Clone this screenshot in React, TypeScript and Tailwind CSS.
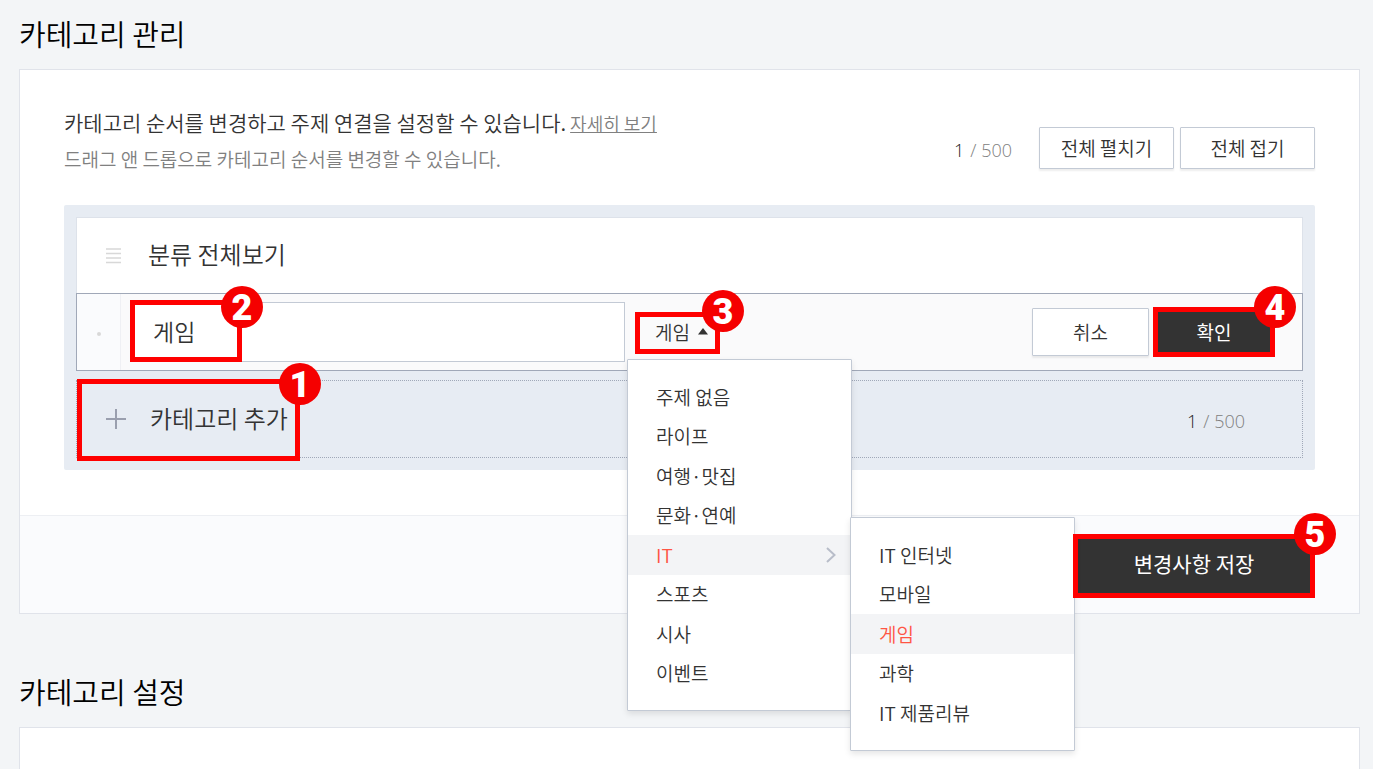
import React, { useState } from 'react'
import clsx from 'clsx'

const topics = ['주제 없음', '라이프', '여행·맛집', '문화·연예', 'IT', '스포츠', '시사', '이벤트']
const itTopics = ['IT 인터넷', '모바일', '게임', '과학', 'IT 제품리뷰']

// numbered guide frame laid over a control
function Step({ no, className, badge }: { no: number, className: string, badge: string }) {
  return (
    <span className={clsx('pointer-events-none absolute z-30 border-5 border-[#ff0000]', className)}>
      <span className={clsx("absolute flex size-[42px] items-center justify-center rounded-full bg-[#f50000] pt-0.5 font-['Roboto',sans-serif] text-[36px] leading-10 font-black text-white", badge)}>
        {no}
      </span>
    </span>
  )
}

function Count({ now, max }: { now: number, max: number }) {
  return (
    <p className="pt-1 font-['Open_Sans',sans-serif] text-[18px] leading-6 font-light text-[#808080]">
      <span className="mr-1.5 text-[#222]">{now}</span>/ {max}
    </p>
  )
}

function WhiteButton({ children, className }: { children: React.ReactNode, className: string }) {
  return (
    <button type="button" className={clsx('rounded-[1px] border border-[#c3cad5] bg-white text-[19px] text-[#333] shadow-[0_2px_2px_rgba(0,0,0,0.07)]', className)}>
      {children}
    </button>
  )
}

function TopicMenu({ value, onSelect }: { value: string, onSelect: (v: string) => void }) {
  const box = 'absolute z-10 w-[225px] rounded-[1px] border border-[#c3cad5] bg-white py-[17px] shadow-[0_3px_6px_rgba(0,0,0,0.1)]'
  const item = 'flex h-full w-full items-center justify-between pl-7 text-left text-[19px]'

  return (
    <ul className={clsx(box, 'top-[65px] left-0 grid h-[352px] auto-rows-fr')}>
      {topics.map(t => (
        <li key={t} className={clsx('relative', t === 'IT' && 'bg-[#f3f4f6]')}>
          <button type="button" className={clsx(item, t === 'IT' ? 'pr-[15px] text-[#ff5544]' : 'text-[#333]')} onClick={() => onSelect(t)}>
            {t}
            {t === 'IT' && (
              <svg width="10" height="16" viewBox="0 0 10 16" fill="none" stroke="#b8bdc9" strokeWidth="2">
                <path d="M1 1l7.5 7L1 15" />
              </svg>
            )}
          </button>
          {t === 'IT' && (
            <ul className={clsx(box, '-top-[18px] left-full -ml-px grid h-[234px] auto-rows-fr')}>
              {itTopics.map(s => (
                <li key={s} className={clsx(s === value && 'bg-[#f3f4f6]')}>
                  <button type="button" className={clsx(item, s === value ? 'text-[#ff5544]' : 'text-[#333]')} onClick={() => onSelect(s)}>
                    {s}
                  </button>
                </li>
              ))}
            </ul>
          )}
        </li>
      ))}
    </ul>
  )
}

export default function App() {
  const [name, setName] = useState('게임')
  const [topic, setTopic] = useState('게임')
  const [open, setOpen] = useState(true)

  return (
    <div className="h-screen overflow-hidden bg-[#f3f5f7] pt-[11px] pr-[13px] pl-[19px] font-['Noto_Sans_CJK_KR',sans-serif] font-[350] text-[#333]">
      <h2 className="mb-3.5 text-[29px] leading-11 text-black">카테고리 관리</h2>

      <section className="border border-[#e0e3ea] bg-white">
        <div className="px-11 pt-[34px] pb-[45px]">
          <div className="flex justify-between">
            <div className="leading-9">
              <p className="text-[21px]">
                카테고리 순서를 변경하고 주제 연결을 설정할 수 있습니다.
                <a href="#" className="ml-1 text-[18px] text-[#808080] underline underline-offset-1">자세히 보기</a>
              </p>
              <p className="text-[19px] text-[#808080]">드래그 앤 드롭으로 카테고리 순서를 변경할 수 있습니다.</p>
            </div>
            <div className="mb-2 flex h-[42px] items-center self-end">
              <div className="mr-[27px]"><Count now={1} max={500} /></div>
              <WhiteButton className="mr-1.5 h-[42px] w-[135px]">전체 펼치기</WhiteButton>
              <WhiteButton className="h-[42px] w-[135px]">전체 접기</WhiteButton>
            </div>
          </div>

          <div className="mt-7 rounded-[2px] bg-[#e7ecf3] p-3">
            <div className="flex h-[76px] items-center border border-b-0 border-[#dde2ea] bg-white pl-[29px]">
              <svg width="15" height="16" viewBox="0 0 15 16" stroke="#d8d8d8" strokeWidth="1.5">
                <path d="M0 1h15M0 5.5h15M0 10h15M0 14.5h15" />
              </svg>
              <span className="ml-[27px] pb-1 text-[24px]">분류 전체보기</span>
            </div>

            <form className="relative flex h-[78px] items-center border border-[#a0a8b8] bg-[#fafafb]" onSubmit={e => e.preventDefault()}>
              <div className="flex h-full w-11 items-center justify-center border-r border-[#eff0f4] bg-[#fafbfd] pt-1">
                <span className="size-1 rounded-full bg-[#d8d8d8]" />
              </div>
              <div className="relative ml-2.5 h-[60px] w-[494px]">
                <input
                  aria-label="카테고리 이름"
                  value={name}
                  onChange={e => setName(e.target.value)}
                  className="h-full w-full border border-[#c3cad5] bg-white px-[21px] pb-0.5 text-[23px] font-[350] outline-none"
                />
                <Step no={2} className="-top-0.5 -left-px h-[62px] w-[112px]" badge="-top-[19px] -right-[26px]" />
              </div>
              <div className="relative ml-0.5 h-full">
                <button type="button" aria-haspopup="true" aria-expanded={open} onClick={() => setOpen(!open)} className="flex h-full items-center pl-7 text-[19px]">
                  {topic}
                  <svg className="mb-0.5 ml-2" width="10" height="7" viewBox="0 0 10 7" fill="#333">
                    <path d="M5 0l5 6.5H0z" />
                  </svg>
                </button>
                <Step no={3} className="top-[18px] left-2 h-[42px] w-[85px]" badge="-top-[27px] -right-[29px]" />
                {open && <TopicMenu value={topic} onSelect={setTopic} />}
              </div>
              <div className="mr-[27px] ml-auto flex items-center">
                <WhiteButton className="mr-1 h-12 w-[117px]">취소</WhiteButton>
                <div className="relative">
                  <button type="submit" className="h-[50px] w-[122px] bg-[#333] text-[19px] font-normal text-white">확인</button>
                  <Step no={4} className="inset-0" badge="-top-[26px] -right-[26px]" />
                </div>
              </div>
            </form>

            <div className="relative mt-[9px] flex h-[78px] items-center justify-between border border-dotted border-[#a0a8b8] pr-[57px] pl-[29px]">
              <button type="button" className="flex items-center text-[24px]">
                <svg width="20" height="20" viewBox="0 0 20 20" stroke="#9a9fae" strokeWidth="2">
                  <path d="M10 0v20M0 10h20" />
                </svg>
                <span className="ml-6 pb-0.5">카테고리 추가</span>
              </button>
              <Count now={1} max={500} />
              <Step no={1} className="-top-0.5 left-0 h-[82px] w-[223px]" badge="-top-[21px] -right-[26px]" />
            </div>
          </div>
        </div>

        <div className="flex justify-end border-t border-[#edeff3] bg-[#fafbfd] px-11 pt-[18px] pb-[15px]">
          <div className="relative">
            <button type="button" className="h-16 w-[242px] bg-[#333] pb-1 text-[21px] font-normal text-white">변경사항 저장</button>
            <Step no={5} className="inset-0" badge="-top-[26px] -right-[26px]" />
          </div>
        </div>
      </section>

      <h2 className="mt-[55px] mb-3.5 text-[29px] leading-11 text-black">카테고리 설정</h2>
      <section className="h-60 border border-[#e0e3ea] bg-white" />
    </div>
  )
}
